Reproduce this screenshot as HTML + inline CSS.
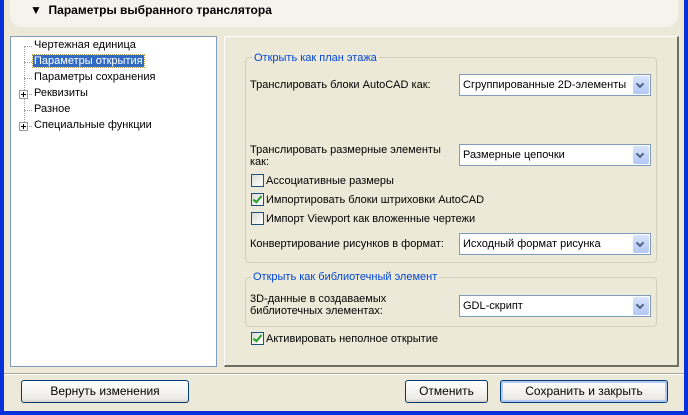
<!DOCTYPE html>
<html><head><meta charset="utf-8"><style>
body{margin:0;width:688px;height:415px;overflow:hidden;background:#ece9d8;font-family:"Liberation Sans",sans-serif;font-size:11px;color:#000;position:relative}
.a{position:absolute}
.sel{position:absolute;left:459px;width:190px;height:20px;background:#fff;border:1px solid #7f9db9}
.sel span{position:absolute;left:3px;top:4px;white-space:nowrap}
.sel i{position:absolute;right:1px;top:1px;width:16px;height:18px;background:linear-gradient(#d8e4fc,#b4c8f6);border-radius:2px}
.sel i:after{content:"";position:absolute;left:4px;top:5px;width:4px;height:4px;border-right:2px solid #4d6185;border-bottom:2px solid #4d6185;transform:rotate(45deg)}
.cb{position:absolute;left:251px;width:11px;height:11px;border:1px solid #1c5180;background:linear-gradient(135deg,#dcdcd7,#fff)}
.cb.c:after{content:"";position:absolute;left:3px;top:0px;width:3px;height:7px;border-right:2px solid #21a121;border-bottom:2px solid #21a121;transform:rotate(40deg)}
.grp{position:absolute;left:245px;width:410px;border:1px solid #d0d0bf;border-radius:4px}
.leg{position:absolute;color:#0046d5;background:#ece9d8;padding:0 2px}
.btn{position:absolute;height:21px;border:1px solid #003c74;border-radius:3px;background:linear-gradient(#fff,#ecebe6 85%,#d6d0c5);text-align:center;line-height:21px;font-size:12px}
.t{position:absolute;left:34px;white-space:nowrap;font-size:11px}
.dot{position:absolute;border-top:1px dotted #a0a0a0;width:8px;left:24px}
.pl{position:absolute;left:19px;width:7px;height:7px;border:1px solid #919b9c;background:#fff}
.pl:before{content:"";position:absolute;left:1px;top:3px;width:5px;height:1px;background:#000}
.pl:after{content:"";position:absolute;left:3px;top:1px;width:1px;height:5px;background:#000}
</style></head><body>
<div class="a" style="left:0;top:0;width:4px;height:415px;background:#0831d9"></div>
<div class="a" style="right:0;top:0;width:4px;height:415px;background:#0831d9"></div>
<div class="a" style="left:0;bottom:0;width:688px;height:4px;background:#0831d9"></div>
<div class="a" style="left:10px;top:-10px;width:668px;height:37px;background:#f4f3ee;border-radius:12px"></div>
<div class="a" style="left:30px;top:3px;font-weight:bold;font-size:12px">▼ &nbsp;Параметры выбранного транслятора</div>

<div class="a" style="left:10px;top:36px;width:205px;height:329px;background:#fff;border:1px solid #7f9db9"></div>
<div class="a" style="left:24px;top:46px;height:82px;border-left:1px dotted #a0a0a0"></div>
<div class="dot" style="top:46px"></div><div class="t" style="top:39px">Чертежная единица</div>
<div class="dot" style="top:62px"></div><div class="t" style="top:55px;background:#316ac5;color:#fff;padding:0 1px;left:33px;outline:1px dotted #c0a040">Параметры открытия</div>
<div class="dot" style="top:78px"></div><div class="t" style="top:71px">Параметры сохранения</div>
<div class="dot" style="top:94px"></div><div class="pl" style="top:90px"></div><div class="t" style="top:87px">Реквизиты</div>
<div class="dot" style="top:110px"></div><div class="t" style="top:103px">Разное</div>
<div class="dot" style="top:126px"></div><div class="pl" style="top:122px"></div><div class="t" style="top:119px">Специальные функции</div>

<div class="a" style="left:224px;top:36px;width:452px;height:328px;border-top:1px solid #fff;border-left:1px solid #fff;border-right:2px solid #716f64;border-bottom:2px solid #716f64"></div>

<div class="grp" style="top:57px;height:204px"></div>
<div class="leg" style="left:252px;top:52px">Открыть как план этажа</div>
<div class="a" style="left:250px;top:79px">Транслировать блоки AutoCAD как:</div>
<div class="sel" style="top:74px"><span>Сгруппированные 2D-элементы</span><i></i></div>
<div class="a" style="left:250px;top:144px;line-height:12px">Транслировать размерные элементы<br>как:</div>
<div class="sel" style="top:144px"><span>Размерные цепочки</span><i></i></div>
<div class="cb" style="top:174px"></div><div class="a" style="left:266px;top:175px">Ассоциативные размеры</div>
<div class="cb c" style="top:193px"></div><div class="a" style="left:266px;top:194px">Импортировать блоки штриховки AutoCAD</div>
<div class="cb" style="top:212px"></div><div class="a" style="left:266px;top:213px">Импорт Viewport как вложенные чертежи</div>
<div class="a" style="left:250px;top:238px">Конвертирование рисунков в формат:</div>
<div class="sel" style="top:233px"><span>Исходный формат рисунка</span><i></i></div>

<div class="grp" style="top:277px;height:48px"></div>
<div class="leg" style="left:251px;top:271px">Открыть как библиотечный элемент</div>
<div class="a" style="left:250px;top:293px;line-height:12px">3D-данные в создаваемых<br>библиотечных элементах:</div>
<div class="sel" style="top:295px"><span>GDL-скрипт</span><i></i></div>
<div class="cb c" style="top:332px"></div><div class="a" style="left:266px;top:333px">Активировать неполное открытие</div>

<div class="a" style="left:4px;top:373px;width:680px;height:1px;background:#aca899;border-bottom:1px solid #fff"></div>
<div class="btn" style="left:21px;top:380px;width:166px">Вернуть изменения</div>
<div class="btn" style="left:405px;top:380px;width:81px">Отменить</div>
<div class="btn" style="left:500px;top:380px;width:166px;box-shadow:inset 0 0 0 2px #b4c8f6">Сохранить и закрыть</div>
</body></html>
